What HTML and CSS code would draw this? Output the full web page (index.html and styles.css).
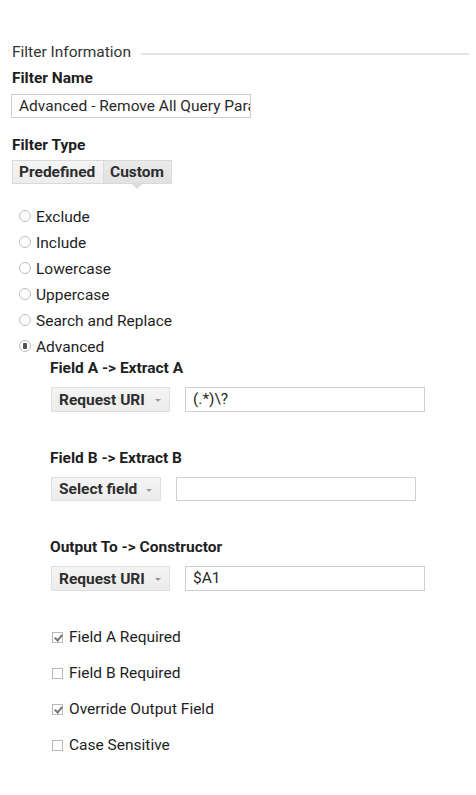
FILE: index.html
```
<!DOCTYPE html>
<html>
<head>
<meta charset="utf-8">
<link rel="stylesheet" href="styles.css">
</head>
<body>
<div class="page">
  <div class="legend"><span class="legend-text">Filter Information</span><span class="legend-line"></span></div>

  <div class="label label-name">Filter Name</div>
  <input class="textbox name-box" type="text" value="Advanced - Remove All Query Parameters">

  <div class="label label-type">Filter Type</div>
  <div class="toggle">
    <span class="tbtn">Predefined</span><span class="tbtn active">Custom</span>
  </div>

  <div class="radios">
    <div class="radio"><span class="circle"></span>Exclude</div>
    <div class="radio"><span class="circle"></span>Include</div>
    <div class="radio"><span class="circle"></span>Lowercase</div>
    <div class="radio"><span class="circle"></span>Uppercase</div>
    <div class="radio"><span class="circle"></span>Search and Replace</div>
    <div class="radio"><span class="circle checked"></span>Advanced</div>
  </div>

  <div class="adv">
    <div class="sublabel">Field A -&gt; Extract A</div>
    <div class="fieldrow">
      <span class="select w-req">Request URI<span class="arrow"></span></span>
      <span class="textbox field">(.*)\?</span>
    </div>

    <div class="sublabel gap">Field B -&gt; Extract B</div>
    <div class="fieldrow small">
      <span class="select w-sel">Select field<span class="arrow"></span></span>
      <span class="textbox field"></span>
    </div>

    <div class="sublabel gap">Output To -&gt; Constructor</div>
    <div class="fieldrow">
      <span class="select w-req">Request URI<span class="arrow"></span></span>
      <span class="textbox field">$A1</span>
    </div>

    <div class="checks">
      <div class="check"><span class="box on"></span>Field A Required</div>
      <div class="check"><span class="box"></span>Field B Required</div>
      <div class="check"><span class="box on"></span>Override Output Field</div>
      <div class="check"><span class="box"></span>Case Sensitive</div>
    </div>
  </div>
</div>
</body>
</html>
```
FILE: styles.css
```
* { box-sizing: border-box; }
html, body { margin: 0; padding: 0; background: #fff; }
body {
  font-family: Roboto, "Liberation Sans", Arial, sans-serif;
  color: #1e1e1e;
  font-size: 15.5px;
}
.page { padding: 42px 7px 40px 12px; }

.legend { display: flex; align-items: center; height: 20px; }
.legend-text { font-size: 15.5px; color: #333; line-height: 20px; }
.legend-line { flex: 1; height: 2px; background: #e3e3e3; margin-left: 10px; margin-top: 4px; }

.label { font-weight: 700; font-size: 15.5px; line-height: 20px; color: #1e1e1e; }
.label-name { margin-top: 6px; }
.label-type { margin-top: 17px; }

.textbox {
  display: block;
  border: 1px solid #cfcfcf;
  background: #fff;
  height: 24px;
  line-height: 22px;
  padding: 0 6px;
  font-family: Roboto, "Liberation Sans", Arial, sans-serif;
  font-size: 15.5px;
  color: #2a2a2a;
  white-space: nowrap;
  overflow: hidden;
  margin: 0;
  outline: none;
  border-radius: 0;
}
.name-box { width: 240px; margin-top: 6px; margin-left: -1px; padding: 0 0 0 7px; }

.toggle { display: flex; margin-top: 5px; position: relative; }
.tbtn {
  height: 24px;
  line-height: 22px;
  border: 1px solid #dadada;
  background: linear-gradient(#f5f5f5, #ececec);
  font-weight: 700;
  font-size: 15.5px;
  color: #2e2e2e;
  padding: 0 6px;
}
.tbtn:first-child { width: 92px; }
.tbtn.active {
  width: 68px;
  background: linear-gradient(#eaeaea, #e2e2e2);
  border-left: none;
  position: relative;
}
.tbtn.active::after {
  content: "";
  position: absolute;
  left: 28px;
  top: 23px;
  border-left: 5px solid transparent;
  border-right: 5px solid transparent;
  border-top: 5px solid #dcdcdc;
}

.radios { margin-top: 20px; }
.radio { display: flex; align-items: center; height: 26px; padding-left: 7px; font-size: 15.5px; }
.circle {
  width: 12px; height: 12px;
  border: 1px solid #bdbdbd;
  border-radius: 50%;
  margin-right: 5px;
  background: #fff;
  position: relative;
  margin-top: -3px;
}
.circle.checked::after {
  content: "";
  position: absolute;
  left: 3px; top: 2px;
  width: 4px; height: 6px;
  border-radius: 1px;
  background: #555;
}

.adv { padding-left: 38px; }
.sublabel { font-weight: 700; font-size: 15.5px; line-height: 16px; color: #1e1e1e; }
.sublabel.gap { margin-top: 38px; }

.fieldrow { display: flex; align-items: center; margin-top: 11px; height: 25px; }
.fieldrow.small { margin-top: 11px; height: 24px; }
.select {
  display: flex; align-items: center;
  height: 100%;
  border: 1px solid #e0e0e0;
  background: linear-gradient(#f4f4f4, #ececec);
  font-weight: 700;
  font-size: 15.5px;
  color: #2e2e2e;
  padding-left: 7px;
  position: relative;
  margin-left: 1px;
}
.w-req { width: 119px; margin-right: 15px; }
.w-sel { width: 110px; margin-right: 15px; }
.arrow {
  position: absolute;
  right: 8px;
  top: 11px;
  border-left: 3px solid transparent;
  border-right: 3px solid transparent;
  border-top: 3px solid #999;
}
.field { width: 240px; height: 100%; line-height: 22px; padding-left: 7px; }

.checks { margin-top: 28px; }
.check { display: flex; align-items: center; height: 36px; font-size: 15.5px; padding-left: 2px; }
.box {
  width: 11px; height: 11px;
  border: 1px solid #b9b9b9;
  background: #fff;
  margin-right: 6px;
  position: relative;
}
.box.on::after {
  content: "";
  position: absolute;
  left: 3px; top: 0px;
  width: 3px; height: 6px;
  border-right: 2px solid #777;
  border-bottom: 2px solid #777;
  transform: rotate(40deg);
}
```
